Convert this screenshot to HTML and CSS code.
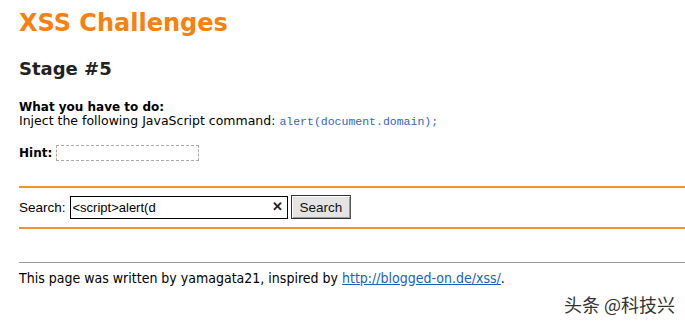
FILE: index.html
```html
<!DOCTYPE html>
<html lang="en">
<head>
    <meta charset="UTF-8">
    <title>XSS Challenges</title>
    <link rel="stylesheet" href="styles.css">
</head>
<body>

<div class="page">
    <h1>XSS Challenges</h1>
    <h2>Stage #5</h2>

    <div class="task">
        <b>What you have to do:</b><br>
        Inject the following JavaScript command: <code>alert(document.domain);</code>
    </div>

    <div class="hint">
        <b>Hint:</b> <span class="hint-box"></span>
    </div>

    <form class="search-form">
        <label for="q">Search:</label>
        <span class="search-field">
            <input type="text" id="q" value="&lt;script&gt;alert(d">
            <span class="clear">&#x2715;</span>
        </span>
        <button type="button">Search</button>
    </form>

    <div class="footer">
        This page was written by yamagata21, inspired by <a href="#">http://blogged-on.de/xss/</a>.
    </div>
</div>

<div class="watermark">头条 @科技兴</div>

</body>
</html>
```

FILE: styles.css
```css
body {
    margin: 0;
    background: #fff;
    font-family: "DejaVu Sans", Verdana, sans-serif;
    font-size: 12.5px;
    color: #000;
}
.page {
    margin-left: 19px;
    padding-top: 9px;
}
h1 {
    margin: 0;
    font-size: 24px;
    color: #f7810f;
    line-height: 29px;
}
h2 {
    margin: 20px 0 0;
    font-size: 18px;
    color: #222;
    line-height: 22px;
}
.task {
    margin-top: 20px;
    line-height: 14px;
}
.task b {
    font-size: 12px;
}
code {
    font-family: "Liberation Mono", "Courier New", monospace;
    font-size: 11.5px;
    color: #3366bb;
}
.hint {
    margin-top: 16px;
    display: flex;
    align-items: center;
    gap: 4px;
}
.hint b {
    font-size: 12px;
}
.hint-box {
    display: inline-block;
    width: 141px;
    height: 14px;
    border: 1px dashed #aaa;
}
.search-form {
    margin-top: 25px;
    border-top: 2px solid #f0932f;
    border-bottom: 2px solid #f0932f;
    padding: 7px 0 8px;
    display: flex;
    align-items: center;
    font-family: "Liberation Sans", Arial, sans-serif;
    font-size: 13.5px;
}
.search-form label {
    margin-right: 4px;
}
.search-field {
    position: relative;
    display: inline-block;
}
.search-field input {
    display: block;
    width: 190px;
    height: 21px;
    padding: 0 24px 0 2px;
    border: 1px solid #000;
    font-family: "Liberation Sans", Arial, sans-serif;
    font-size: 13px;
    outline: none;
}
.clear {
    position: absolute;
    right: 5px;
    top: 3px;
    font-size: 13px;
    font-weight: bold;
    color: #222;
}
.search-form button {
    margin-left: 3px;
    height: 24px;
    padding: 0 8px;
    background: #e4e4e4;
    border: 1px solid #333;
    border-right-color: #555;
    box-shadow: inset 1px 1px 0 #fff, inset -1px -1px 0 #999;
    font-family: "Liberation Sans", Arial, sans-serif;
    font-size: 13.5px;
    color: #111;
}
.footer {
    margin-top: 33px;
    border-top: 1px solid #999;
    padding-top: 7px;
    font-family: "DejaVu Sans Condensed", Tahoma, sans-serif;
    font-size: 14px;
}
.footer a {
    color: #1a5fc0;
}
.watermark {
    position: absolute;
    right: 10px;
    top: 291px;
    font-family: "Noto Sans CJK SC", sans-serif;
    font-size: 18px;
    color: #333;
    text-shadow: 0 0 2px #fff;
}
```
